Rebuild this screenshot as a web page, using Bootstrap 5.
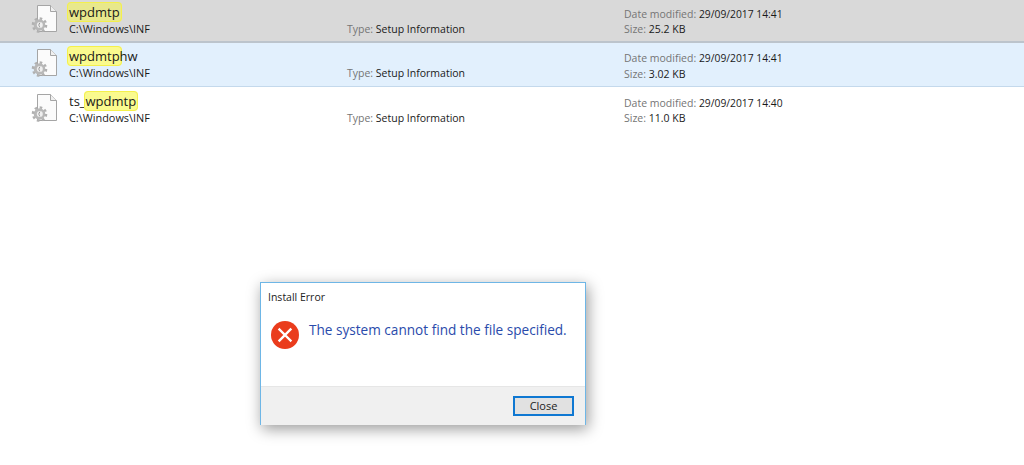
<!DOCTYPE html>
<html lang="en">
<head>
    <meta charset="UTF-8">
    <meta name="viewport" content="width=device-width, initial-scale=1.0">
    <title>Install Error</title>
    <link href="https://cdn.jsdelivr.net/npm/bootstrap@5.3.0/dist/css/bootstrap.min.css" rel="stylesheet">
    <style>
        body {
            width: 1024px;
            height: 465px;
            overflow: hidden;
            background: #fff;
            font-family: "Open Sans", "Noto Sans", sans-serif;
            color: #1a1a1a;
        }
        .result-row {
            height: 44px;
            padding-left: 31px;
            font-size: 10.5px;
            line-height: 14px;
        }
        .row-grey { background: #d9d9d9; border-bottom: 2px solid #bcc4cc; margin-top: -1px; }
        .row-blue { background: #e2f0fd; border-bottom: 1px solid #c4d9ec; }
        .row-plain { padding-top: 1px; }
        .file-icon { width: 28px; margin-top: 5px; flex: none; }
        .col-name { width: 278px; margin-left: 10px; padding-top: 4px; flex: none; }
        .col-type { width: 277px; padding-top: 23px; flex: none; }
        .col-date { padding-top: 8px; }
        .file-name { font-size: 13px; line-height: 19px; height: 19px; }
        .file-path { font-size: 10.9px; line-height: 14px; }
        .hit {
            background: #fafa8e;
            border: 1px solid #f4f04c;
            border-radius: 4px;
            padding: 0 1px;
            margin: 0 -2px;
        }
        .row-grey .hit { background: #e8e88c; }
        .lbl { color: #757575; }
        .date-val { font-size: 10.3px; }
        .line-gap { margin-top: 2px; }
        .row-grey .line-gap, .row-plain .line-gap { margin-top: 1px; }
        .error-box {
            position: absolute;
            left: 260px;
            top: 282px;
            width: 326px;
            height: 143px;
            background: #fff;
            border: 1px solid #6eb6e6;
            box-shadow: 2px 4px 14px rgba(0, 0, 0, .4);
        }
        .box-title { height: 22px; font-size: 10.5px; line-height: 14px; padding: 7px 0 0 7px; color: #222; }
        .box-body { height: 81px; padding: 16px 0 0 10px; }
        .box-msg { font-size: 13.6px; line-height: 20px; color: #2a4bab; margin-left: 10px; margin-top: -1px; }
        .box-foot {
            height: 39px;
            background: #f0f0f0;
            border-top: 1px solid #e6e6e6;
            padding-right: 11px;
        }
        .close-btn {
            width: 61px;
            height: 20px;
            padding: 0;
            font-size: 11px;
            line-height: 16px;
            background: #e1e1e1;
            border: 2px solid #0f78d2;
            border-radius: 0;
            color: #222;
        }
    </style>
</head>
<body>
    <svg width="0" height="0" class="d-block">
        <symbol id="setup-file" viewBox="0 0 28 34">
            <path d="M6.500 1.500H19.500L25.500 7.500V27.500H6.500Z" fill="#fbfbfb" stroke="#a5a5a5"/>
            <path d="M19.500 1.500V7.500H25.500" fill="#f0f0f0" stroke="#a5a5a5"/>
            <circle cx="8.500" cy="21" r="5.800" fill="#b8b8b8"/>
            <circle cx="8.500" cy="21" r="6.600" fill="none" stroke="#b0b0b0" stroke-width="2.400" stroke-dasharray="2.600 2.580"/>
            <circle cx="8.800" cy="21" r="3" fill="#efefef"/>
            <path d="M9.500 18.200a3 3 0 0 0 0 5.600 4 4 0 0 1 0-5.600z" fill="#5a5a5a"/>
        </symbol>
    </svg>

    <div class="result-row row-grey d-flex">
        <svg class="file-icon" height="34"><use href="#setup-file"/></svg>
        <div class="col-name">
            <div class="file-name"><span class="hit">wpdmtp</span></div>
            <div class="file-path">C:\Windows\INF</div>
        </div>
        <div class="col-type"><span class="lbl">Type:</span> Setup Information</div>
        <div class="col-date">
            <div><span class="lbl">Date modified:</span> <span class="date-val">29/09/2017 14:41</span></div>
            <div class="line-gap"><span class="lbl">Size:</span> 25.2 KB</div>
        </div>
    </div>
    <div class="result-row row-blue d-flex">
        <svg class="file-icon" height="34"><use href="#setup-file"/></svg>
        <div class="col-name">
            <div class="file-name"><span class="hit">wpdmtp</span>hw</div>
            <div class="file-path">C:\Windows\INF</div>
        </div>
        <div class="col-type"><span class="lbl">Type:</span> Setup Information</div>
        <div class="col-date">
            <div><span class="lbl">Date modified:</span> <span class="date-val">29/09/2017 14:41</span></div>
            <div class="line-gap"><span class="lbl">Size:</span> 3.02 KB</div>
        </div>
    </div>
    <div class="result-row row-plain d-flex">
        <svg class="file-icon" height="34"><use href="#setup-file"/></svg>
        <div class="col-name">
            <div class="file-name">ts_<span class="hit">wpdmtp</span></div>
            <div class="file-path">C:\Windows\INF</div>
        </div>
        <div class="col-type"><span class="lbl">Type:</span> Setup Information</div>
        <div class="col-date">
            <div><span class="lbl">Date modified:</span> <span class="date-val">29/09/2017 14:40</span></div>
            <div class="line-gap"><span class="lbl">Size:</span> 11.0 KB</div>
        </div>
    </div>

    <div class="error-box">
        <div class="box-title">Install Error</div>
        <div class="box-body d-flex">
            <svg width="28" height="28" viewBox="0 0 28 28" class="flex-shrink-0">
                <circle cx="14" cy="14" r="14" fill="#ea3c1c"/>
                <path d="M8.500 8.500L19.500 19.500M19.500 8.500L8.500 19.500" stroke="#fff" stroke-width="2.400" stroke-linecap="square"/>
            </svg>
            <div class="box-msg">The system cannot find the file specified.</div>
        </div>
        <div class="box-foot d-flex align-items-center justify-content-end">
            <button type="button" class="btn close-btn">Close</button>
        </div>
    </div>

    <script src="https://cdn.jsdelivr.net/npm/bootstrap@5.3.0/dist/js/bootstrap.bundle.min.js"></script>
</body>
</html>
